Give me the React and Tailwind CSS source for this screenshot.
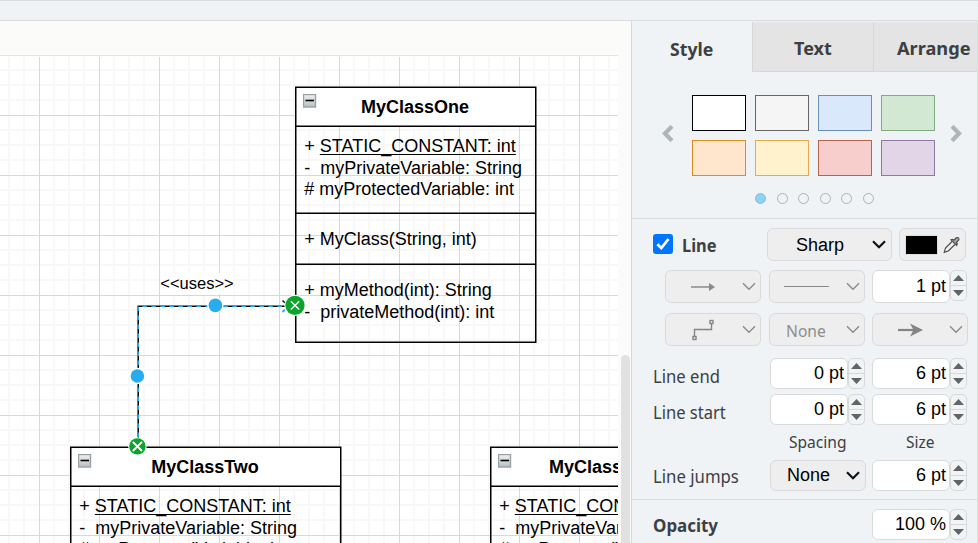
import React from "react";

const ARIAL = "font-['Liberation_Sans',Arial,sans-serif]";
const UI = "font-['Noto_Sans','Open_Sans',sans-serif]";

/* ---------- Diagram ---------- */

function Grid() {
  const minor = [15, 30, 45];
  return (
    <svg className="absolute inset-0 h-full w-full">
      <defs>
        <pattern id="grid" width="60" height="60" patternUnits="userSpaceOnUse" x="39" y="59">
          {minor.map((m) => (
            <path key={m} d={`M${m} 0V60M0 ${m}H60`} stroke="#f8f8f8" strokeWidth="2" />
          ))}
          <path d="M0.5 0V60M0 0.5H60" stroke="#d8d8d8" strokeWidth="1" />
        </pattern>
      </defs>
      <rect y="1" width="100%" height="100%" fill="url(#grid)" />
    </svg>
  );
}

function Collapse() {
  return (
    <svg width="14" height="14" viewBox="0 0 14 14" className="absolute left-[8px] top-[8px]">
      <defs>
        <linearGradient id="fold" x1="0" y1="0" x2="0" y2="1">
          <stop offset="0" stopColor="#f0f1f1" />
          <stop offset="1" stopColor="#b8c0c2" />
        </linearGradient>
      </defs>
      <rect x="0.5" y="0.5" width="12" height="12.5" fill="url(#fold)" stroke="#98a1a4" strokeWidth="1.4" />
      <path d="M2.5 6.5H11" stroke="#000" strokeWidth="1.6" />
    </svg>
  );
}

function ClassBox({ place, width, title }) {
  return (
    <div className={`absolute h-[257px] text-[18px] leading-[21.6px] text-black ${ARIAL} ${place}`}>
      <svg className="absolute left-0 top-0" width={width + 2} height="257">
        <rect x="0.75" y="1.25" width={width} height="39" fill="#fff" />
        <path
          d={`M0.75 1.25H${width + 0.75}V256.25H0.75ZM0.75 40.25H${width + 0.75}M0.75 127.25H${width + 0.75}M0.75 178.25H${width + 0.75}`}
          fill="none"
          stroke="#000"
          strokeWidth="1.5"
        />
      </svg>
      <Collapse />
      <div className="relative h-[40px] pr-[1px] pt-[11px] text-center font-bold">{title}</div>
      <div className="relative h-[87px] whitespace-pre pl-[9.3px] pt-[10px]">
        <div>
          + <span className="underline decoration-1 underline-offset-[2px] [text-decoration-skip-ink:none]">STATIC_CONSTANT: int</span>
        </div>
        <div>{"-  myPrivateVariable: String"}</div>
        <div># myProtectedVariable: int</div>
      </div>
      <div className="relative h-[51px] whitespace-pre pl-[9.3px] pt-[16px]">+ MyClass(String, int)</div>
      <div className="relative whitespace-pre pl-[9.3px] pt-[16px]">
        <div>+ myMethod(int): String</div>
        <div>{"-  privateMethod(int): int"}</div>
      </div>
    </div>
  );
}

function Terminal({ x, y, r, a, w }) {
  return (
    <g>
      <circle cx={x} cy={y} r={r + 1} fill="#fff" />
      <circle cx={x} cy={y} r={r} fill="#0aa52a" />
      <path d={`M${x - a} ${y - a}L${x + a} ${y + a}M${x + a} ${y - a}L${x - a} ${y + a}`} stroke="#fff" strokeWidth={w} />
    </g>
  );
}

function Connector() {
  return (
    <svg className="absolute left-0 top-0" width="618" height="487" viewBox="0 56 618 487">
      <path d="M138.2 446V306.2H290" fill="none" stroke="#000" strokeWidth="1.5" />
      <path d="M138.2 446V306.2H290" fill="none" stroke="#29a9f0" strokeWidth="1.5" strokeDasharray="4.5 4.5" />
      <path d="M282.5 300.5L285 303M287 304L291 306" stroke="#10202c" strokeWidth="1.5" />
      <path d="M282.5 312L288 306.5" stroke="#29a9f0" strokeWidth="1.8" strokeDasharray="3.5 1.5" />
      {[[215.4, 305.4], [137.4, 376]].map(([x, y]) => (
        <g key={x}>
          <circle cx={x} cy={y} r="8.2" fill="#fff" />
          <circle cx={x} cy={y} r="6.8" fill="#29abf0" />
        </g>
      ))}
      <Terminal x={295} y={305.4} r={9.6} a={4.2} w={1.4} />
      <Terminal x={137.4} y={446.4} r={8.2} a={4.6} w={1.9} />
    </svg>
  );
}

function Canvas() {
  return (
    <div className="relative h-[487px] w-[618px] overflow-hidden bg-white">
      <Grid />
      <ClassBox place="left-[295px] top-[30px] w-[241px]" width={240} title="MyClassOne" />
      <ClassBox place="left-[70px] top-[390px] w-[271px]" width={270} title="MyClassTwo" />
      <ClassBox place="left-[490px] top-[390px] w-[241px]" width={240} title="MyClassThree" />
      <div className={`absolute left-[160px] top-[217px] h-[21px] w-[74px] bg-white text-center text-[16.5px] leading-[20px] text-black ${ARIAL}`}>
        &lt;&lt;uses&gt;&gt;
      </div>
      <Connector />
    </div>
  );
}

/* ---------- Format panel ---------- */

const swatches = [
  "bg-white border-black",
  "bg-[#f5f5f5] border-[#666666]",
  "bg-[#dae8fc] border-[#6a90b8]",
  "bg-[#d3e8d3] border-[#80ae82]",
  "bg-[#ffe6cc] border-[#d98f1e]",
  "bg-[#fff2cc] border-[#e8ab4b]",
  "bg-[#f8cecc] border-[#b5644c]",
  "bg-[#e1d5e7] border-[#8c7b9c]",
];

function Chevron({ bold }) {
  return (
    <svg width="14" height="9" viewBox="0 0 14 9" fill="none" stroke={bold ? "#0b1217" : "#8a8a8a"} strokeWidth={bold ? 2.2 : 1.4}>
      <path d="M1 1.3L7 7.3L13 1.3" />
    </svg>
  );
}

function DropButton({ children, className = "" }) {
  return (
    <div className={`flex h-[33px] w-[96px] shrink-0 items-center justify-end rounded-[6px] border border-[#dadada] bg-[#eeeeee] pr-[4px] ${className}`}>
      {children}
      <Chevron />
    </div>
  );
}

function NumberField({ value, tall }) {
  return (
    <div className="flex w-[95px] shrink-0 items-start">
      <div
        className={`w-[78px] rounded-[6px] border border-[#dadada] bg-white pr-[3px] text-right text-[18px] text-black ${ARIAL} ${
          tall ? "h-[33px] leading-[31px]" : "h-[31px] leading-[29px]"
        }`}
      >
        {value}
      </div>
      <div className="flex h-[31px] w-[17px] flex-col rounded-[5px] border border-[#d8d8d8] bg-[#f0f4f5]">
        <div className="flex flex-1 items-center justify-center border-b border-[#d8d8d8]">
          <svg width="11" height="6"><path d="M0 6L5.5 0L11 6Z" fill="#626567" /></svg>
        </div>
        <div className="flex flex-1 items-center justify-center">
          <svg width="11" height="6"><path d="M0 0H11L5.5 6Z" fill="#626567" /></svg>
        </div>
      </div>
    </div>
  );
}

function Pager({ flip }) {
  return (
    <svg width="13" height="19" viewBox="0 0 13 19" className={`mt-[28.5px] ${flip ? "-scale-x-100" : ""}`}>
      <path d="M11 2.3L4 9.5L11 16.7" fill="none" stroke="#b0b5b8" strokeWidth="4.2" />
    </svg>
  );
}

function Label({ children, className = "" }) {
  return <span className={`inline-block origin-left whitespace-nowrap ${className}`}>{children}</span>;
}

function Panel() {
  return (
    <div className={`flex h-full w-[346px] flex-col border-r border-[#dcdfe0] bg-[#eff3f5] pt-[1px] text-[18px] text-[#3c4043] ${UI}`}>
      <div className="flex h-[50px] text-[18px] font-bold leading-[52px]">
        <div className="w-[120px] pl-[38px]"><Label className="scale-x-[0.98] leading-[54px]">Style</Label></div>
        <div className="w-[121px] border-b border-l border-[#d5d7d8] bg-[#e4e4e4] pl-[41px]"><Label>Text</Label></div>
        <div className="w-[104px] border-b border-l border-[#d5d7d8] bg-[#e4e4e4] pl-[23px]"><Label className="scale-x-[1.01]">Arrange</Label></div>
      </div>

      <div className="flex h-[147px] flex-col border-b border-[#d7dadb] pt-[23px]">
        <div className="flex pl-[29px]">
          <Pager />
          <div className="ml-[18px] mr-[15px] grid grid-cols-[repeat(4,54px)] gap-[9px]">
            {swatches.map((s) => (
              <div key={s} className={`h-[36px] border ${s}`} />
            ))}
          </div>
          <Pager flip />
        </div>
        <div className="mt-[17px] flex gap-[10.6px] pl-[123px]">
          {[0, 1, 2, 3, 4, 5].map((i) => (
            <div key={i} className={`size-[11px] rounded-full border border-[#adb2b4] ${i === 0 ? "bg-[#87d4fa]" : ""}`} />
          ))}
        </div>
      </div>

      <div className="flex h-[281px] flex-col border-b border-[#d7dadb] pt-[9px]">
        <div className="flex h-[33px] pl-[21px]">
          <div className="mt-[6px] flex size-[20px] items-center justify-center rounded-[3px] bg-[#0075ff]">
            <svg width="16" height="16" viewBox="0 0 16 16"><path d="M2.3 8.3L6.3 12L13.5 3" fill="none" stroke="#fff" strokeWidth="2.8" /></svg>
          </div>
          <div className="w-[94px] pl-[9px] font-bold leading-[35px]"><Label className="scale-x-[0.91]">Line</Label></div>
          <div className={`flex w-[125px] items-center justify-end rounded-[6px] border border-[#dadada] bg-[#eeeeee] pr-[5px] text-black ${ARIAL}`}>
            <span className="mr-[28px] mt-[2px]">Sharp</span>
            <Chevron bold />
          </div>
          <div className="ml-[7px] flex w-[67px] items-center rounded-[6px] border border-[#dadada] bg-[#eeeeee] pl-[5px]">
            <div className="h-[20px] w-[33px] border border-[#dedede] bg-black" />
            <svg width="17" height="18" viewBox="0 0 17 18" className="ml-[5px]" fill="none" stroke="#4a4a4a" strokeWidth="1.1">
              <path d="M9 5.5L2.5 12L1.2 16.3L5.3 15L12 8.5" />
              <path d="M8 3.8L13.7 9.5L14.3 7.5L13.3 6.5L15.6 4.2C16.6 2.5 15 .8 13.2 1.8L11 4.2L9.8 3.3Z" fill="#a5a5a5" />
            </svg>
          </div>
        </div>

        <div className="mt-[9px] flex h-[33px] pl-[33px]">
          <DropButton>
            <svg width="24" height="10" className="mr-[27px] mt-[1px]"><path d="M0 5H18" stroke="#8a8a8a" strokeWidth="1.5" /><path d="M18 1L24 5L18 9Z" fill="#8a8a8a" /></svg>
          </DropButton>
          <DropButton className="ml-[8px]">
            <div className="mr-[17px] h-[1px] w-[45px] bg-[#8a8a8a]" />
          </DropButton>
          <div className="ml-[7px]"><NumberField value="1 pt" tall /></div>
        </div>

        <div className="mt-[10px] flex h-[33px] pl-[33px]">
          <DropButton>
            <svg width="22" height="22" viewBox="0 0 22 22" className="mr-[28px]" fill="none" stroke="#858585" strokeWidth="1.4">
              <path d="M2.5 17.5V10.5H19.5V4.5" />
              <rect x="1" y="17.5" width="3" height="3" />
              <rect x="18" y="1.5" width="3" height="3" />
            </svg>
          </DropButton>
          <DropButton className="ml-[8px]">
            <span className={`mr-[17px] mt-[3px] text-[17px] text-[#8d8d8d] ${UI}`}><Label className="scale-x-[0.92]">None</Label></span>
          </DropButton>
          <DropButton className="ml-[7px]">
            <svg width="25" height="14" className="mr-[26px]"><path d="M0 7H18" stroke="#858585" strokeWidth="2.2" /><path d="M12 0.5L25 7L12 13.5L15.5 7Z" fill="#858585" /></svg>
          </DropButton>
        </div>

        <div className="mt-[12px] flex h-[31px] pl-[21px]">
          <div className="w-[117px] leading-[36px]"><Label className="scale-x-[0.925]">Line end</Label></div>
          <NumberField value="0 pt" />
          <div className="ml-[7px]"><NumberField value="6 pt" /></div>
        </div>
        <div className="mt-[5px] flex h-[31px] pl-[21px]">
          <div className="w-[117px] leading-[36px]"><Label className="scale-x-[0.92]">Line start</Label></div>
          <NumberField value="0 pt" />
          <div className="ml-[7px]"><NumberField value="6 pt" /></div>
        </div>
        <div className="flex h-[35px] pl-[157px] text-[17px] leading-[34px]">
          <div className="w-[117px]"><Label className="scale-x-[0.915]">Spacing</Label></div>
          <Label className="scale-x-[0.91]">Size</Label>
        </div>
        <div className="flex h-[31px] pl-[21px]">
          <div className="w-[117px] leading-[32px]"><Label className="scale-x-[0.93]">Line jumps</Label></div>
          <div className={`flex w-[96px] items-center justify-end rounded-[6px] border border-[#dadada] bg-[#eeeeee] pr-[5px] text-black ${ARIAL}`}>
            <span className="mr-[16px]">None</span>
            <Chevron bold />
          </div>
          <div className="ml-[6px]"><NumberField value="6 pt" /></div>
        </div>
      </div>

      <div className="flex pl-[21px] pt-[9px]">
        <div className="w-[219px] font-bold leading-[32px]"><Label className="scale-x-[0.94]">Opacity</Label></div>
        <NumberField value="100 %" />
      </div>
    </div>
  );
}

export default function App() {
  return (
    <div className="flex h-[543px] w-[978px] flex-col overflow-hidden bg-[#eff3f5]">
      <div className="h-[21px] shrink-0 border-b border-t border-[#d9dcdd]" />
      <div className="flex h-[522px]">
        <div className="flex w-[632px] flex-col border-r border-[#d5d7d8] bg-[#fbfbf9]">
          <div className="h-[35px] w-[618px] shrink-0 border-b border-[#e4e4e4]" />
          <div className="flex">
            <Canvas />
            <div className="ml-[3px] mt-[299px] h-[200px] w-[9px] rounded-t-[5px] bg-[#e1e1e0]" />
          </div>
        </div>
        <Panel />
      </div>
    </div>
  );
}
